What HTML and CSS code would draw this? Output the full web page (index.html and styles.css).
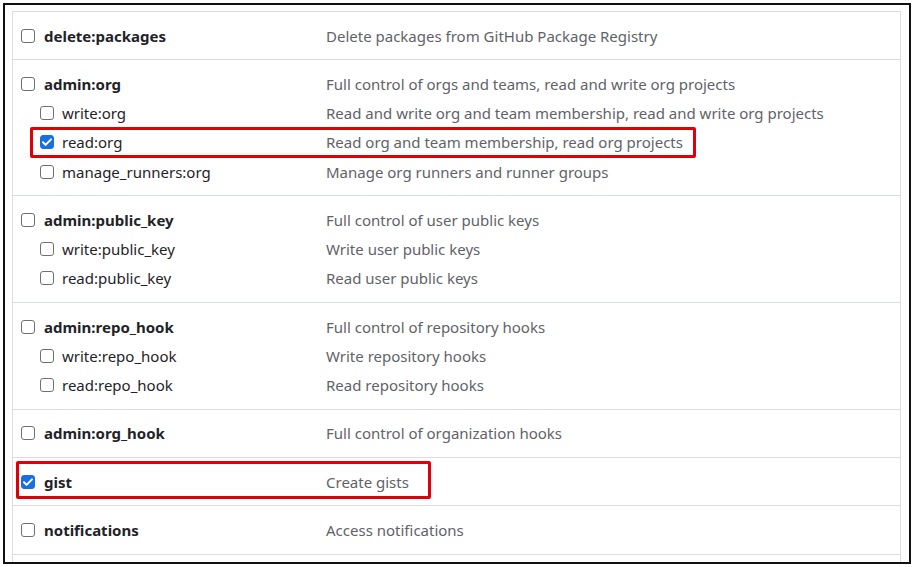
FILE: index.html
```html
<!DOCTYPE html>
<html lang="en">
<head>
<meta charset="utf-8">
<title>Scopes</title>
<link rel="stylesheet" href="styles.css">
</head>
<body>
<div class="frame">
  <div class="panel">
    <div class="group">
      <div class="row main"><span class="name"><span class="cb"></span>delete:packages</span><span class="desc">Delete packages from GitHub Package Registry</span></div>
    </div>
    <div class="group">
      <div class="row main"><span class="name"><span class="cb"></span>admin:org</span><span class="desc">Full control of orgs and teams, read and write org projects</span></div>
      <div class="row sub"><span class="name"><span class="cb"></span>write:org</span><span class="desc">Read and write org and team membership, read and write org projects</span></div>
      <div class="row sub"><span class="name"><span class="cb checked"></span>read:org</span><span class="desc">Read org and team membership, read org projects</span><span class="mark mark-org"></span></div>
      <div class="row sub"><span class="name"><span class="cb"></span>manage_runners:org</span><span class="desc">Manage org runners and runner groups</span></div>
    </div>
    <div class="group">
      <div class="row main"><span class="name"><span class="cb"></span>admin:public_key</span><span class="desc">Full control of user public keys</span></div>
      <div class="row sub"><span class="name"><span class="cb"></span>write:public_key</span><span class="desc">Write user public keys</span></div>
      <div class="row sub"><span class="name"><span class="cb"></span>read:public_key</span><span class="desc">Read user public keys</span></div>
    </div>
    <div class="group">
      <div class="row main"><span class="name"><span class="cb"></span>admin:repo_hook</span><span class="desc">Full control of repository hooks</span></div>
      <div class="row sub"><span class="name"><span class="cb"></span>write:repo_hook</span><span class="desc">Write repository hooks</span></div>
      <div class="row sub"><span class="name"><span class="cb"></span>read:repo_hook</span><span class="desc">Read repository hooks</span></div>
    </div>
    <div class="group">
      <div class="row main"><span class="name"><span class="cb"></span>admin:org_hook</span><span class="desc">Full control of organization hooks</span></div>
    </div>
    <div class="group">
      <div class="row main"><span class="name"><span class="cb checked"></span>gist</span><span class="desc">Create gists</span><span class="mark mark-gist"></span></div>
    </div>
    <div class="group">
      <div class="row main"><span class="name"><span class="cb"></span>notifications</span><span class="desc">Access notifications</span></div>
    </div>
  </div>
</div>
</body>
</html>
```

FILE: styles.css
```css
* { box-sizing: border-box; }
html, body { margin: 0; padding: 0; background: #fff; }
body {
  font-family: "Noto Sans", "Open Sans", "Liberation Sans", sans-serif;
  font-size: 15px;
  color: #1f2328;
  width: 914px;
  height: 567px;
  overflow: hidden;
}
.frame {
  margin: 3px;
  height: 561px;
  border: 2px solid #111;
  padding: 6px 8px 0 7px;
  overflow: hidden;
}
.panel {
  border: 1px solid #d8dee4;
  border-bottom: none;
  height: 100%;
}
.group {
  padding: 9px 0;
  border-bottom: 1px solid #d8dee4;
}
.row {
  position: relative;
  display: grid;
  grid-template-columns: 313px 1fr;
  align-items: center;
  height: 29.25px;
}
.name {
  display: flex;
  align-items: center;
  gap: 9px;
  padding-left: 8px;
  white-space: nowrap;
}
.main .name { font-weight: 700; }
.sub .name { padding-left: 27px; gap: 8px; }
.desc { color: #5f6368; white-space: nowrap; }
.cb {
  flex: none;
  width: 14px;
  height: 14px;
  border: 1px solid #707070;
  border-radius: 3px;
  background: #fff;
}
.cb.checked {
  border-color: #1a6fe0;
  background: #1a6fe0 url("data:image/svg+xml,%3Csvg xmlns='http://www.w3.org/2000/svg' viewBox='0 0 14 14'%3E%3Cpath d='M3 7.3l2.6 2.6L11 4.4' fill='none' stroke='%23fff' stroke-width='2' stroke-linecap='round' stroke-linejoin='round'/%3E%3C/svg%3E") center / 14px 14px no-repeat;
}
.mark {
  position: absolute;
  border: 3px solid #e0000a;
  border-radius: 2px;
  pointer-events: none;
}
.mark-org { left: 17px; width: 666px; top: -1px; bottom: -1px; }
.mark-gist { left: 3px; width: 415px; top: -6px; bottom: -3px; }
```
